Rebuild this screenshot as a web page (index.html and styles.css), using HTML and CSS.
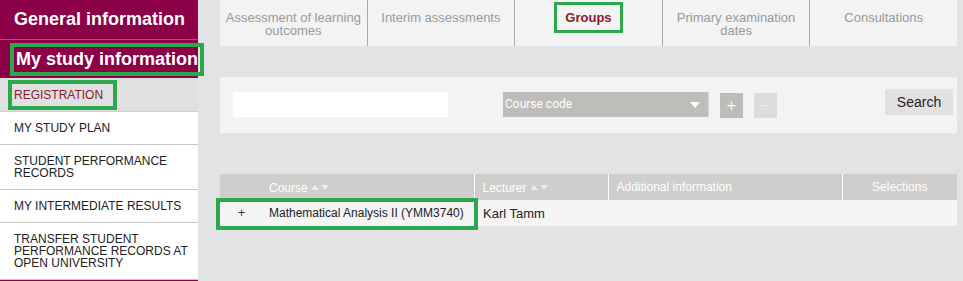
FILE: index.html
```html
<!DOCTYPE html>
<html lang="en">
<head>
  <meta charset="UTF-8">
  <meta name="viewport" content="width=device-width, initial-scale=1.0">
  <title>My study information</title>
  <link rel="stylesheet" href="styles.css">
</head>
<body>
  <div class="page">
    <div class="sidebar">
      <div class="side-head">General information</div>
      <div class="side-sub"><span class="mark">My study information</span></div>
      <ul class="side-menu">
        <li class="active"><span class="mark">REGISTRATION</span></li>
        <li>MY STUDY PLAN</li>
        <li>STUDENT PERFORMANCE<br>RECORDS</li>
        <li>MY INTERMEDIATE RESULTS</li>
        <li>TRANSFER STUDENT<br>PERFORMANCE RECORDS AT<br>OPEN UNIVERSITY</li>
      </ul>
    </div>
    <div class="main">
      <div class="tabs">
        <div class="tab">Assessment of learning<br>outcomes</div>
        <div class="tab">Interim assessments</div>
        <div class="tab current"><span class="mark">Groups</span></div>
        <div class="tab">Primary examination<br>dates</div>
        <div class="tab">Consultations</div>
      </div>
      <div class="filter">
        <input type="text" class="query">
        <div class="select">Course code<span class="arrow"></span></div>
        <span class="btn plus">+</span>
        <span class="btn minus">&minus;</span>
        <button class="search">Search</button>
      </div>
      <table class="groups">
        <colgroup>
          <col style="width: 42px">
          <col style="width: 212px">
          <col style="width: 134px">
          <col style="width: 234px">
          <col>
        </colgroup>
        <thead>
          <tr>
            <th class="exp"></th>
            <th>Course <span class="sort"><svg width="18" height="7" viewBox="0 0 18 7"><path d="M0 6 L4 1 L8 6 Z M10 1 L18 1 L14 6 Z" fill="#ecebea"/></svg></span></th>
            <th>Lecturer <span class="sort"><svg width="18" height="7" viewBox="0 0 18 7"><path d="M0 6 L4 1 L8 6 Z M10 1 L18 1 L14 6 Z" fill="#ecebea"/></svg></span></th>
            <th>Additional information</th>
            <th class="center">Selections</th>
          </tr>
        </thead>
        <tbody>
          <tr>
            <td class="exp"><span class="row-mark"></span>+</td>
            <td>Mathematical Analysis II (YMM3740)</td>
            <td class="lect">Karl Tamm</td>
            <td></td>
            <td></td>
          </tr>
        </tbody>
      </table>
    </div>
  </div>
</body>
</html>
```

FILE: styles.css
```css
* {
  margin: 0;
  padding: 0;
  box-sizing: border-box;
}

body {
  background-color: #e2e3e4;
  font-family: "Liberation Sans", Arial, sans-serif;
  height: 281px;
  overflow: hidden;
}

.page {
  display: flex;
  height: 281px;
}

.mark {
  display: inline-block;
  outline: 4px solid #2aa84b;
}

/* sidebar */
.sidebar {
  width: 198px;
  flex-shrink: 0;
  background-color: #8c0047;
  height: 281px;
}

.side-head {
  height: 40px;
  padding: 9px 0 0 14px;
  color: #fff;
  font-size: 18px;
  font-weight: bold;
  border-bottom: 1px solid #b2497e;
  white-space: nowrap;
}

.side-sub {
  height: 38px;
  padding: 7px 0 0 14px;
  color: #fff;
  font-size: 18px;
  font-weight: bold;
  white-space: nowrap;
}

.side-sub .mark {
  line-height: 25px;
  padding: 0 2px;
}

.side-menu {
  list-style: none;
}

.side-menu li {
  background-color: #fff;
  font-size: 12px;
  line-height: 12px;
  color: #222;
  padding: 10px 0 10px 14px;
  border-bottom: 1px solid #c8c8c8;
}

.side-menu li.active {
  background-color: #e0e0e0;
  color: #8c1a2e;
  padding: 6px 0 5px 14px;
  border-bottom: 1px solid #cfcfcf;
}

.side-menu li.active .mark {
  margin-left: -2px;
  padding: 5px 10px 5px 2px;
}

/* main */
.main {
  flex: 1;
  padding: 0 6px 0 22px;
}

.tabs {
  display: flex;
  height: 46px;
  background-color: #f3f3f3;
}

.tab {
  flex: 1;
  text-align: center;
  font-size: 13px;
  line-height: 13px;
  color: #999;
  padding-top: 11px;
  border-left: 1px solid #a9a9a9;
}

.tab:first-child {
  border-left: none;
}

.tab.current {
  color: #8c1a2e;
  font-weight: bold;
  padding-top: 5px;
}

.tab.current .mark {
  line-height: 15px;
  padding: 5px 8px;
  outline-width: 3px;
}

.filter {
  display: flex;
  align-items: flex-start;
  margin-top: 31px;
  height: 56px;
  background-color: #f3f3f3;
  padding: 15px 4px 0 13px;
}

.query {
  width: 215px;
  height: 25px;
  border: none;
  background-color: #fff;
}

.select {
  position: relative;
  margin-left: 55px;
  width: 206px;
  height: 25px;
  background-color: #bebdb9;
  border-right: 1px solid #d8d7d4;
  color: #fff;
  font-family: Roboto, "Liberation Sans", sans-serif;
  font-size: 12px;
  line-height: 25px;
  padding-left: 2px;
}

.arrow {
  position: absolute;
  right: 8px;
  top: 10px;
  border-left: 5px solid transparent;
  border-right: 5px solid transparent;
  border-top: 6px solid #fff;
}

.btn {
  width: 23px;
  height: 25px;
  margin-top: 1px;
  margin-left: 11px;
  color: #fff;
  font-size: 16px;
  line-height: 25px;
  text-align: center;
}

.plus {
  background-color: #bdbcb8;
}

.minus {
  background-color: #dcdcda;
  color: #ececeb;
}

.search {
  margin-left: auto;
  margin-top: -3px;
  width: 68px;
  height: 26px;
  border: none;
  background-color: #e2e1df;
  font-family: "Liberation Sans", Arial, sans-serif;
  font-size: 14px;
  color: #222;
}

/* table */
.groups {
  margin-top: 41px;
  width: 100%;
  border-collapse: collapse;
  table-layout: fixed;
  font-size: 12px;
}

.groups th {
  height: 26px;
  background-color: #d0cecc;
  color: #fff;
  font-weight: normal;
  text-align: left;
  padding: 0 8px;
  border-left: 1px solid #fff;
}

.groups th.exp,
.groups th:nth-child(2) {
  border-left: none;
}

.groups th:nth-child(2) {
  padding-left: 7px;
}

.groups th.center {
  text-align: center;
}

.sort {
  vertical-align: 1px;
}

.groups td {
  height: 26px;
  background-color: #f5f5f5;
  color: #222;
  padding: 0 0 0 7px;
  white-space: nowrap;
}

.groups td.exp {
  position: relative;
  padding-left: 18px;
}

.groups td.lect {
  padding-left: 9px;
  font-size: 13px;
}

.row-mark {
  position: absolute;
  left: -4px;
  top: -2px;
  width: 262px;
  height: 32px;
  border: 4px solid #2aa84b;
}
```
